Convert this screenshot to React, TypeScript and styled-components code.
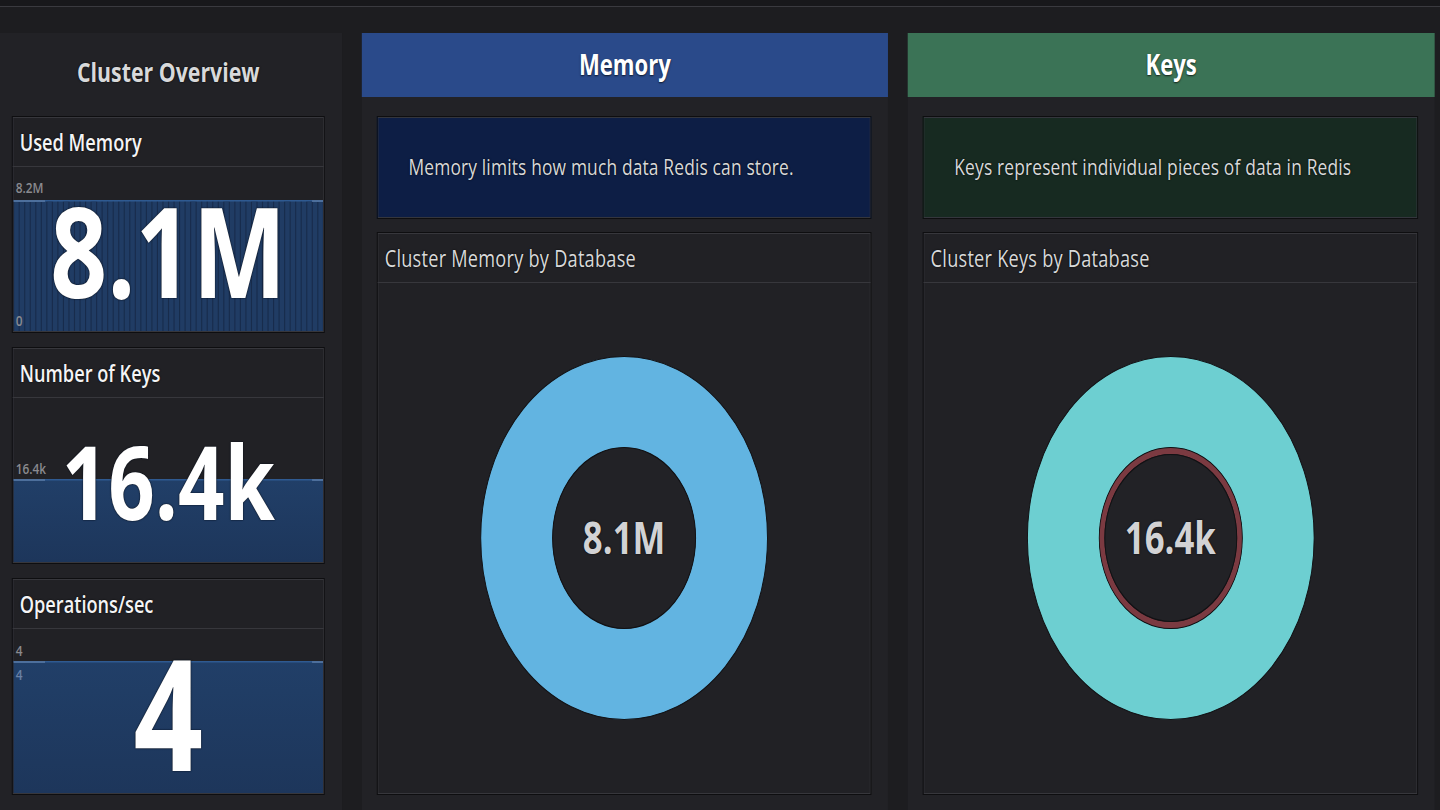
import React from "react";
import styled, { createGlobalStyle } from "styled-components";

// the reference is a wide dashboard squashed horizontally, so the page is laid
// out at full width and scaled on x only
const SCALE = 0.79;
const WIDTH = Math.round(1440 / SCALE);

const GlobalStyle = createGlobalStyle`
  html, body {
    margin: 0;
    padding: 0;
    background: #1d1d20;
    overflow: hidden;
  }
  body {
    font-family: "Open Sans", "Noto Sans", sans-serif;
  }
`;

const Canvas = styled.div`
  width: ${WIDTH}px;
  height: 810px;
  transform: scaleX(${SCALE});
  transform-origin: 0 0;
  background: #1d1d20;
  overflow: hidden;
`;

const TopBar = styled.div`
  height: 6px;
  background: #18181b;
  border-bottom: 1px solid #3a3a3f;
`;

const Row = styled.div`
  display: flex;
  gap: 25px;
  padding-top: 26px;
  height: 803px;
  box-sizing: border-box;
`;

const Overview = styled.section`
  width: 433px;
  flex-shrink: 0;
  background: #222226;
  padding: 0 22px 0 15px;
  box-sizing: border-box;
  display: flex;
  flex-direction: column;
  gap: 14px;
`;

const OverviewTitle = styled.h2`
  margin: 0;
  height: 69px;
  flex-shrink: 0;
  padding-top: 7px;
  box-sizing: border-box;
  display: flex;
  align-items: center;
  justify-content: center;
  font-size: 27px;
  font-weight: 700;
  color: #d8d9da;
  text-shadow: 0 0 2px #000;
`;

const Panel = styled.div<{ $height: number }>`
  height: ${(p) => p.$height}px;
  flex-shrink: 0;
  box-sizing: border-box;
  border: 1px solid #0e0e10;
  box-shadow: inset 0 0 0 1px #37373c;
  background: #212125;
  display: flex;
  flex-direction: column;
`;

const PanelHeader = styled.div<{ $bright?: boolean }>`
  height: 50px;
  flex-shrink: 0;
  box-sizing: border-box;
  border-bottom: 1px solid #37373c;
  padding: 0 9px;
  display: flex;
  align-items: center;
  font-size: 23px;
  font-weight: ${(p) => (p.$bright ? 600 : 500)};
  letter-spacing: ${(p) => (p.$bright ? 0 : 0.3)}px;
  color: ${(p) => (p.$bright ? "#f4f4f5" : "#d8d9da")};
  text-shadow: 0 0 2px #000;
`;

const ChartArea = styled.div`
  flex: 1;
  margin: 0 1px 1px;
  position: relative;
  display: flex;
  align-items: center;
  justify-content: center;
`;

const ChartSvg = styled.svg`
  position: absolute;
  inset: 0;
  width: 100%;
  height: 100%;
`;

const AxisLabel = styled.span<{ $top: number; $blue?: boolean }>`
  position: absolute;
  left: 3px;
  top: ${(p) => p.$top - 9}px;
  line-height: 18px;
  font-size: 15px;
  font-weight: 600;
  color: ${(p) => (p.$blue ? "#6b82a6" : "#8a8a8f")};
`;

const BigValue = styled.div<{ $size: number }>`
  position: relative;
  font-size: ${(p) => p.$size}px;
  font-weight: 700;
  line-height: 1;
  color: #ffffff;
  text-shadow: 0 0 2px #07101f, 0 0 1px #000;
`;

const Column = styled.section<{ $width: number }>`
  width: ${(p) => p.$width}px;
  flex-shrink: 0;
  background: #222226;
  display: flex;
  flex-direction: column;
`;

const ColumnHeader = styled.div<{ $bg: string }>`
  height: 64px;
  flex-shrink: 0;
  background: ${(p) => p.$bg};
  display: flex;
  align-items: center;
  justify-content: center;
  padding-bottom: 2px;
  box-sizing: border-box;
  font-size: 28px;
  font-weight: 700;
  color: #ffffff;
  text-shadow: 0 1px 2px rgba(0, 0, 0, 0.7);
`;

const ColumnBody = styled.div`
  padding: 19px 21px 0 19px;
  display: flex;
  flex-direction: column;
  gap: 13px;
`;

const Description = styled.div<{ $bg: string }>`
  height: 103px;
  box-sizing: border-box;
  background: ${(p) => p.$bg};
  border: 1px solid #0e0e10;
  box-shadow: inset 0 0 0 1px #34363d;
  display: flex;
  align-items: center;
  padding: 0 0 4px 39px;
  font-size: 22px;
  font-weight: 500;
  letter-spacing: 0.2px;
  color: #d8d9da;
  text-shadow: 0 0 2px #000;
`;

const DonutWrap = styled.div`
  position: relative;
  width: 366px;
  height: 366px;
  display: flex;
  align-items: center;
  justify-content: center;
`;

const DonutSvg = styled.svg`
  position: absolute;
  inset: 0;
`;

const DonutValue = styled.span`
  position: relative;
  font-size: 44px;
  font-weight: 700;
  color: #d2d2d4;
  margin-top: -2px;
  text-shadow: 0 0 2px #000;
`;

type Label = { text: string; y: number; blue?: boolean };

type Stat = {
  title: string;
  value: string;
  size: number;
  fillTop: number;
  bars?: boolean;
  labels: Label[];
};

const stats: Stat[] = [
  {
    title: "Used Memory",
    value: "8.1M",
    size: 126,
    fillTop: 33,
    bars: true,
    labels: [
      { text: "8.2M", y: 20 },
      { text: "0", y: 153 },
    ],
  },
  {
    title: "Number of Keys",
    value: "16.4k",
    size: 103,
    fillTop: 81,
    labels: [{ text: "16.4k", y: 70 }],
  },
  {
    title: "Operations/sec",
    value: "4",
    size: 154,
    fillTop: 32,
    labels: [
      { text: "4", y: 21 },
      { text: "4", y: 45, blue: true },
    ],
  },
];

const W = 392;
const H = 164;
const jitter = [1, 2, 1, 0, 1, 1, 2, 0, 1, 2, 1, 1, 0, 1, 2, 1, 0, 0, 1, 1, 0, 0, 0, 1, 0, 0, 1, 0, 1, 1, 0, 1, 2, 1, 1, 0, 1, 1, 2, 1, 1, 0, 1, 2, 1, 1, 0, 1, 1, 2, 1, 1, 1, 2, 1, 1];

const Sparkline = ({ fillTop, bars }: { fillTop: number; bars?: boolean }) => (
  <ChartSvg viewBox={`0 0 ${W} ${H}`} preserveAspectRatio="none">
    <defs>
      <linearGradient id={`fill${fillTop}`} x1="0" y1="0" x2="0" y2="1">
        <stop offset="0" stopColor="#213f68" />
        <stop offset="1" stopColor="#1d365b" />
      </linearGradient>
    </defs>
    {bars ? (
      <>
        <rect x="0" y={fillTop + 1} width={W} height={H - fillTop} fill="#182c4c" />
        {jitter.map((j, i) => (
          <rect
            key={i}
            x={i * 7 + 1}
            y={fillTop + j}
            width="5.6"
            height={H - fillTop - j}
            fill="#203c64"
          />
        ))}
      </>
    ) : (
      <rect x="0" y={fillTop} width={W} height={H - fillTop} fill={`url(#fill${fillTop})`} />
    )}
    <rect x="0" y={fillTop} width={W} height="1.5" fill="#2f5a91" />
    <rect x="0" y={fillTop} width="40" height="2" fill="#4d6f9c" />
    <rect x={W - 14} y={fillTop} width="14" height="2" fill="#4d6f9c" />
  </ChartSvg>
);

const StatPanel = ({ stat }: { stat: Stat }) => (
  <Panel $height={217}>
    <PanelHeader $bright>{stat.title}</PanelHeader>
    <ChartArea>
      <Sparkline fillTop={stat.fillTop} bars={stat.bars} />
      {stat.labels.map((l, i) => (
        <AxisLabel key={i} $top={l.y} $blue={l.blue}>
          {l.text}
        </AxisLabel>
      ))}
      <BigValue $size={stat.size}>{stat.value}</BigValue>
    </ChartArea>
  </Panel>
);

const Donut = ({ color, value, ring }: { color: string; value: string; ring?: boolean }) => (
  <DonutWrap>
    <DonutSvg width="366" height="366" viewBox="-183 -183 366 366">
      <circle r="136" fill="none" stroke={color} strokeWidth="91" />
      <circle r="181.5" fill="none" stroke="#111114" strokeWidth="1.2" />
      <circle r="90.5" fill="#222226" stroke="#111114" strokeWidth="1.2" />
      {ring && (
        <>
          <circle r="87" fill="none" stroke="#7b3a41" strokeWidth="6" />
          <circle r="83.5" fill="none" stroke="#111114" strokeWidth="1.2" />
        </>
      )}
    </DonutSvg>
    <DonutValue>{value}</DonutValue>
  </DonutWrap>
);

type Section = {
  title: string;
  width: number;
  header: string;
  descBg: string;
  desc: string;
  chart: string;
  donut: string;
  value: string;
  ring?: boolean;
};

const sections: Section[] = [
  {
    title: "Memory",
    width: 666,
    header: "#2a4a8a",
    descBg: "#0d1e45",
    desc: "Memory limits how much data Redis can store.",
    chart: "Cluster Memory by Database",
    donut: "#62b4e1",
    value: "8.1M",
  },
  {
    title: "Keys",
    width: 667,
    header: "#3b7356",
    descBg: "#172a21",
    desc: "Keys represent individual pieces of data in Redis",
    chart: "Cluster Keys by Database",
    donut: "#6dcfd1",
    value: "16.4k",
    ring: true,
  },
];

export default function App() {
  return (
    <>
      <GlobalStyle />
      <Canvas>
        <TopBar />
        <Row>
          <Overview>
            <OverviewTitle>Cluster Overview</OverviewTitle>
            {stats.map((s) => (
              <StatPanel key={s.title} stat={s} />
            ))}
          </Overview>
          {sections.map((s) => (
            <Column key={s.title} $width={s.width}>
              <ColumnHeader $bg={s.header}>{s.title}</ColumnHeader>
              <ColumnBody>
                <Description $bg={s.descBg}>{s.desc}</Description>
                <Panel $height={563}>
                  <PanelHeader>{s.chart}</PanelHeader>
                  <ChartArea>
                    <Donut color={s.donut} value={s.value} ring={s.ring} />
                  </ChartArea>
                </Panel>
              </ColumnBody>
            </Column>
          ))}
        </Row>
      </Canvas>
    </>
  );
}
